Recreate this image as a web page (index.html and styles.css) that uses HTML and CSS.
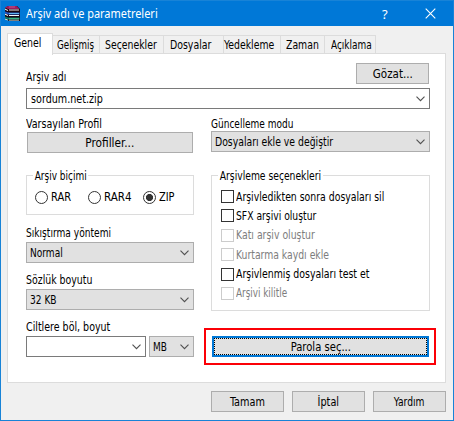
FILE: index.html
```html
<!DOCTYPE html>
<html lang="tr">
<head>
<meta charset="utf-8">
<title>Arşiv adı ve parametreleri</title>
<link rel="stylesheet" href="styles.css">
</head>
<body>
<div class="window">
  <header class="titlebar">
    <svg class="app-icon" width="17" height="17" viewBox="0 0 17 17">
      <path fill="#1a0710" d="M4 1h9l3 3v12H5l-4-2V3z"/>
      <path fill="#9c1c5e" d="M4 1h8.500l3 3H4L1 2.500z"/><path fill="#c25b8d" d="M5 1.500h6v1H5z"/>
      <path fill="#f3e6ea" d="M5 4.500h10v1H5zM1 3.500l3 1.500v1L1 4.800z"/>
      <path fill="#1f55c8" d="M1 6.500l3 1h11.500V9.500H4L1 8.200z"/><path fill="#5fb4f0" d="M5 8h10v1H5z"/>
      <path fill="#eef5fd" d="M5 10h10v1H5zM1 8.500l3 1.500v1L1 9.800z"/>
      <path fill="#08796c" d="M1 11.500l3 1h11.500v2H4L1 13.200z"/><path fill="#35b583" d="M5 13h10v1H5z"/>
      <path fill="#e4f7ea" d="M5 14.800h10v.8H5zM1 13.500l3 1.200v.9l-3-1.200z"/>
    </svg>
    <span class="title t0">Arşiv adı ve parametreleri</span>
    <span class="help">?</span>
    <svg class="close" width="11" height="11" viewBox="0 0 11 11"><path d="M.7.7l9.6 9.6M10.3.7L.7 10.3"/></svg>
  </header>

  <nav class="tabs">
    <span class="tab active w1"><span class="t1">Genel</span></span><span class="tab w2"><span class="t2">Gelişmiş</span></span><span class="tab w3"><span class="t3">Seçenekler</span></span><span class="tab w4"><span class="t4">Dosyalar</span></span><span class="tab w5"><span class="t5">Yedekleme</span></span><span class="tab w6"><span class="t6">Zaman</span></span><span class="tab w7"><span class="t7">Açıklama</span></span>
  </nav>

  <main class="panel">
    <div class="name-row"><span class="label n1">Arşiv adı</span><span class="button browse"><span class="g1">Gözat...</span></span></div>
    <div class="combo edit archive"><span class="n2">sordum.net.zip</span><svg class="chev" viewBox="0 0 9 6"><path d="M.5.7l4 4 4-4"/></svg></div>

    <div class="columns">
      <section class="left">
        <span class="label l1">Varsayılan Profil</span>
        <span class="button profiles"><span class="l2">Profiller...</span></span>
        <div class="group format">
          <span class="legend l3">Arşiv biçimi</span>
          <div class="radios">
            <span class="radio"></span><span class="r1">RAR</span>
            <span class="radio"></span><span class="r2">RAR4</span>
            <span class="radio on"></span><span class="r3">ZIP</span>
          </div>
        </div>
        <span class="label l4">Sıkıştırma yöntemi</span>
        <div class="combo"><span class="l5">Normal</span><svg class="chev" viewBox="0 0 9 6"><path d="M.5.7l4 4 4-4"/></svg></div>
        <span class="label spaced l6">Sözlük boyutu</span>
        <div class="combo"><span class="l7">32 KB</span><svg class="chev" viewBox="0 0 9 6"><path d="M.5.7l4 4 4-4"/></svg></div>
        <span class="label spaced l8">Ciltlere böl, boyut</span>
        <div class="size-row">
          <div class="combo edit size"><svg class="chev" viewBox="0 0 9 6"><path d="M.5.7l4 4 4-4"/></svg></div>
          <div class="combo unit"><span class="l9">MB</span><svg class="chev" viewBox="0 0 9 6"><path d="M.5.7l4 4 4-4"/></svg></div>
        </div>
      </section>

      <section class="right">
        <span class="label m1">Güncelleme modu</span>
        <div class="combo mode"><span class="m2">Dosyaları ekle ve değiştir</span><svg class="chev" viewBox="0 0 9 6"><path d="M.5.7l4 4 4-4"/></svg></div>
        <div class="group options">
          <span class="legend m3">Arşivleme seçenekleri</span>
          <div class="checks">
            <div class="check"><i></i><span class="c1">Arşivledikten sonra dosyaları sil</span></div>
            <div class="check"><i></i><span class="c2">SFX arşivi oluştur</span></div>
            <div class="check off"><i></i><span class="c3">Katı arşiv oluştur</span></div>
            <div class="check off"><i></i><span class="c4">Kurtarma kaydı ekle</span></div>
            <div class="check"><i></i><span class="c5">Arşivlenmiş dosyaları test et</span></div>
            <div class="check off"><i></i><span class="c6">Arşivi kilitle</span></div>
          </div>
        </div>
        <div class="highlight"><span class="button focused"><span class="focus-ring"><span class="m4">Parola seç...</span></span></span></div>
      </section>
    </div>
  </main>

  <footer class="actions">
    <span class="button"><span class="f1">Tamam</span></span>
    <span class="button"><span class="f2">İptal</span></span>
    <span class="button"><span class="f3">Yardım</span></span>
  </footer>
</div>
</body>
</html>
```
FILE: styles.css
```css
* { box-sizing: border-box; }
body { margin: 0; }
.window {
  width: 454px; height: 421px;
  border: 1px solid #1883d7; border-top: 0;
  background: #f0f0f0; color: #000;
  font: 11.4px/14px "DejaVu Sans Condensed", "DejaVu Sans", sans-serif;
  font-stretch: condensed;
  white-space: nowrap;
  overflow: hidden;
}
.titlebar {
  display: flex; align-items: center;
  height: 26px; padding-left: 3px;
  background: #0078d7; color: #fff;
  border-top: 1px solid #1883d7;
}
.title { margin-left: 5px; width: 356px; flex: none; font: 12px/16px "Noto Sans", sans-serif; }
.help { width: 20px; font: 13px/16px "Noto Sans", sans-serif; }
.close { margin-left: 23px; flex: none; fill: none; stroke: #fff; stroke-width: 1.1; }

.tabs { display: flex; align-items: flex-end; height: 28px; padding-left: 6px; }
.tab {
  height: 19px; padding: 2px 0 0 4px;
  border: 1px solid #dcdcdc; border-left: 0; border-bottom: 0;
}
.tab.active {
  position: relative; z-index: 1;
  height: 22px; margin-bottom: -1px; padding: 2px 0 0 6px;
  border-left: 1px solid #dcdcdc; background: #fff;
}
.w1 { width: 46px; } .w2 { width: 47px; } .w3 { width: 64px; } .w4 { width: 60px; }
.w5 { width: 57px; } .w6 { width: 44px; } .w7 { width: 51px; }
.tab.w3, .tab.w6 { padding-left: 5px; }
.tab.w4, .tab.w7 { padding-left: 6px; }
.tab.w5 { padding-left: 0; }

.panel {
  width: 439px; height: 330px; margin: -1px 0 0 6px; padding: 9px 15px 0 18px;
  border: 1px solid #dcdcdc; background: #fff;
}
.label { display: block; height: 14px; }
.name-row { display: flex; justify-content: space-between; align-items: flex-start; height: 25px; }
.name-row .label { margin-top: 7px; }
.button {
  display: flex; align-items: center; justify-content: center;
  width: 73px; height: 21px;
  border: 1px solid #adadad; background: #e1e1e1;
}
.browse { margin-right: 1px; }
.combo {
  display: flex; align-items: center;
  height: 21px; padding: 0 4px 0 3px;
  border: 1px solid #adadad; background: #e1e1e1;
}
.combo.edit { background: #fff; border-color: #7a7a7a; padding-left: 4px; }
.chev { width: 9px; height: 6px; margin-left: auto; flex: none; fill: none; stroke: #505050; stroke-width: 1.1; }

.columns { display: flex; justify-content: space-between; }
.left { width: 168px; padding-top: 8px; }
.right { width: 219px; padding-top: 8px; }
.profiles { width: 166px; margin: 1px 0 0 1px; }
.group { position: relative; border: 1px solid #dcdcdc; }
.legend { position: absolute; top: -7px; left: 6px; padding: 0 2px; background: #fff; }
.format { height: 40px; margin: 22px 0 11px; }
.radios { display: grid; grid-template-columns: 16px 37px 16px 39px 16px 30px; align-items: center; padding: 14px 0 0 8px; }
.radio { width: 13px; height: 13px; border: 1px solid #333; border-radius: 50%; }
.radio.on { background: radial-gradient(circle, #333 3.2px, #fff 3.9px); }
.left .combo { margin-top: 2px; }
.spaced { margin-top: 10px; }
.size-row { display: flex; justify-content: space-between; }
.size { width: 120px; }
.unit { width: 45px; }
.options { height: 136px; margin: 23px 0 17px; }
.checks { padding: 14px 0 0 9px; }
.check { display: flex; align-items: center; height: 13px; margin-bottom: 6.4px; }
.check i { width: 13px; height: 13px; margin-right: 2px; flex: none; border: 1px solid #333; background: #fff; }
.off { color: #7d7d7d; }
.off i { border-color: #ccc; }
.highlight { width: 232px; height: 37px; margin-left: -7px; padding: 6px; border: 2px solid #fb0007; }
.focused { width: 217px; padding: 0; border: 2px solid #0078d7; }
.focus-ring {
  display: flex; align-items: center; justify-content: center;
  width: 213px; height: 17px; border: 1px dotted #000;
}
.actions { display: flex; gap: 8px; padding: 8px 0 0 210px; }

/* Narrow UI lettering */
.title, .tab > span, .label, .legend, .combo > span, .radios > span:nth-child(even), .check > span {
  transform-origin: 0 50%;
}
.tab > span { display: inline-block; }
.t0 { transform: scaleX(.913); }
.t1 { transform: scaleX(.916); }
.t2 { transform: scaleX(.853); }
.t3 { transform: scaleX(.91); }
.t4 { transform: scaleX(.916); }
.t5 { transform: scaleX(.91); }
.t6 { transform: scaleX(.91); }
.t7 { transform: scaleX(.874); }
.n1 { transform: scaleX(.91); }
.n2 { transform: scaleX(.937); }
.g1 { transform: scaleX(1.01); }
.l1 { transform: scaleX(.932); }
.l2 { transform: scaleX(1.03); }
.l3 { transform: scaleX(.874); }
.l4 { transform: scaleX(.887); }
.l5 { transform: scaleX(.884); }
.l6 { transform: scaleX(.916); }
.l7 { transform: scaleX(.884); }
.l8 { transform: scaleX(.926); }
.l9 { transform: scaleX(.874); }
.r1 { transform: scaleX(.963); }
.r2 { transform: scaleX(1.01); }
.r3 { transform: scaleX(.958); }
.m1 { transform: scaleX(.879); }
.m2 { transform: scaleX(.907); }
.m3 { transform: scaleX(.898); }
.m4 { transform: scaleX(.979); }
.c1 { transform: scaleX(.911); }
.c2 { transform: scaleX(.9); }
.c3 { transform: scaleX(.911); }
.c4 { transform: scaleX(.905); }
.c5 { transform: scaleX(.916); }
.c6 { transform: scaleX(.863); }
.f1 { transform: scaleX(.947); }
.f2 { transform: scaleX(.947); }
.f3 { transform: scaleX(.895); }
```
